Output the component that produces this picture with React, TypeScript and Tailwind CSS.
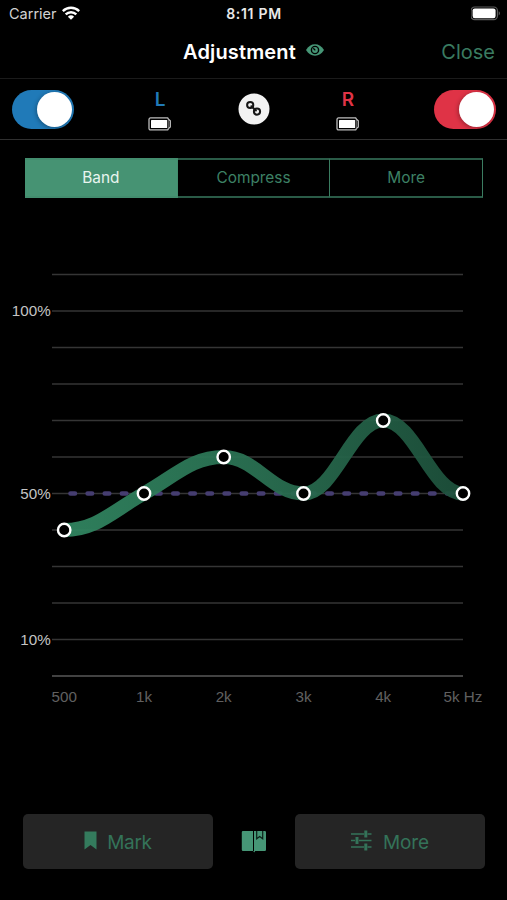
import { useState } from "react";
import clsx from "clsx";

const TABS = ["Band", "Compress", "More"];

// gain in percent at each frequency
const BANDS = [
  { label: "500", x: 64.2, value: 40 },
  { label: "1k", x: 144, value: 50 },
  { label: "2k", x: 223.7, value: 60 },
  { label: "3k", x: 303.5, value: 50 },
  { label: "4k", x: 383.2, value: 70 },
  { label: "5k Hz", x: 463, value: 50 },
];

const GRID = [0, 10, 20, 30, 40, 50, 60, 70, 80, 90, 100, 110];

const CHART_TOP = 260;

const toY = (value: number) => 676 - value * 3.65 - CHART_TOP;

function curvePath() {
  return BANDS.map((band, i) => {
    const y = toY(band.value);
    if (i === 0) return `M${band.x} ${y}`;
    const prev = BANDS[i - 1];
    const dx = (band.x - prev.x) / 2.5;
    // the curve keeps rising through 1k, every other point is an extreme
    const slopeIn = i === 1 ? 18 : 0;
    const slopeOut = i === 2 ? 18 : 0;
    return `C${prev.x + dx} ${toY(prev.value) - slopeOut} ${band.x - dx} ${y + slopeIn} ${band.x} ${y}`;
  }).join(" ");
}

function WifiIcon() {
  return (
    <svg className="-mt-[2px] ml-[5px]" width="18" height="14" viewBox="0 0 18 14" fill="none" stroke="#fff" strokeWidth="2.4">
      <path d="M.8 5.1a11.7 11.7 0 0 1 16.4 0" />
      <path d="M3.7 8.4a7.5 7.5 0 0 1 10.6 0" />
      <path d="M9 13.8 5.9 10.8a4.5 4.5 0 0 1 6.2 0z" fill="#fff" stroke="none" />
    </svg>
  );
}

function StatusBattery() {
  return (
    <svg className="-mt-[2px]" width="31" height="15" viewBox="0 0 31 15">
      <rect x="0" y="1" width="26.400" height="12.600" rx="3.600" fill="none" stroke="#5c5c5c" strokeWidth="1.200" />
      <rect x="1.600" y="2.400" width="23" height="9.800" rx="2.200" fill="#fff" />
      <path d="M27.700 5.200c1.700.6 1.700 3.600 0 4.200z" fill="#5c5c5c" />
    </svg>
  );
}

function DeviceBattery() {
  return (
    <svg width="24" height="14" viewBox="0 0 24 14">
      <path
        d="M2.500.900h17.200l1 1.600 1.600 1.300v6.200l-1.600 1.300-1 1.600H2.500a1.500 1.500 0 0 1-1.500-1.500V2.400A1.500 1.500 0 0 1 2.500.900z"
        fill="none"
        stroke="#bdbdbd"
        strokeWidth="1.300"
      />
      <rect x="3" y="3" width="16.200" height="8" rx=".5" fill="#fff" />
      <path d="M20.400 2.600v8.800" stroke="#777" strokeWidth=".8" />
    </svg>
  );
}

function EyeIcon() {
  return (
    <svg className="mb-[4px] ml-[10px]" width="18" height="12" viewBox="0 0 18 12">
      <path d="M0 6C2.300 2.200 5.300.300 9 .300S15.700 2.200 18 6c-2.300 3.800-5.300 5.700-9 5.700S2.300 9.800 0 6z" fill="#469676" />
      <circle cx="9" cy="6" r="4.300" fill="#000" />
      <circle cx="9" cy="6" r="2.900" fill="#469676" />
      <path d="M7.300 4.300 9.300 6.400" stroke="#000" strokeWidth="1.300" />
    </svg>
  );
}

function LinkIcon() {
  return (
    <svg width="32" height="32" viewBox="0 0 32 32" fill="none">
      <circle cx="16" cy="16" r="15.500" fill="#f2f2f2" />
      <g stroke="#161616" strokeWidth="2">
        <circle cx="12.200" cy="12" r="3.100" />
        <circle cx="19" cy="18.600" r="3.100" />
        <path d="m13.400 13.200 4.500 4.300" strokeLinecap="round" />
      </g>
    </svg>
  );
}

function BookIcon() {
  return (
    <svg width="26" height="24" viewBox="0 0 26 24">
      <path d="M2 1h10v20H2a1.200 1.200 0 0 1-1.200-1.200V2.200A1.200 1.200 0 0 1 2 1z" fill="#469676" />
      <path d="M13 1h10.800A1.200 1.200 0 0 1 25 2.200v17.600a1.200 1.200 0 0 1-1.200 1.200h-9.600l-1 1.500-1-1.500h.8z" fill="#469676" />
      <path d="M15.700 1v7.700l3-2.300 3 2.300V1" fill="none" stroke="#0c2219" strokeWidth="1.200" />
    </svg>
  );
}

function SlidersIcon() {
  return (
    <svg className="-mt-[2px]" width="21" height="21" viewBox="0 0 21 21" fill="none" stroke="#347359" strokeWidth="1.400">
      <path d="M0 4h13M16.500 4h4M0 10.500h4M8 10.500h12.500M0 17h13M16.500 17h4" />
      <path d="M14.800.500v7M6 7v7M14.800 13.500v7" strokeWidth="3" />
    </svg>
  );
}

function Switch({ color }: { color: string }) {
  const [on, setOn] = useState(true);

  return (
    <button
      onClick={() => setOn(!on)}
      className={clsx("flex h-[39px] w-[62px] items-center rounded-full px-[2px]", on ? `${color} justify-end` : "bg-neutral-700")}
    >
      <span className="size-[35px] rounded-full bg-white shadow-[-1px_1px_4px_rgba(0,0,0,0.3)]" />
    </button>
  );
}

function Side({ name, color }: { name: string; color: string }) {
  return (
    <div className="flex flex-col items-center gap-[8px] pt-[3px]">
      <span className={clsx("text-[19px] leading-[19px] font-semibold", color)}>{name}</span>
      <DeviceBattery />
    </div>
  );
}

function Chart() {
  return (
    <svg className="block" width="507" height="460" viewBox="0 0 507 460" fontFamily="Liberation Sans, sans-serif" fontSize="15.2">
      <defs>
        <linearGradient id="curve" gradientUnits="userSpaceOnUse" x1="64" y1="0" x2="463" y2="0">
          <stop offset="0" stopColor="#318661" />
          <stop offset=".5" stopColor="#2a7052" />
          <stop offset="1" stopColor="#1d503b" />
        </linearGradient>
      </defs>
      {GRID.map((value) => (
        <path key={value} d={`M52 ${toY(value)}H463`} stroke={value === 0 ? "#585858" : "#353535"} strokeWidth="1.6" />
      ))}
      <path d={`M70.5 ${toY(50)}H463`} stroke="#453d70" strokeWidth="4.6" strokeDasharray="4.5 12.62" strokeLinecap="round" />
      <path d={curvePath()} fill="none" stroke="url(#curve)" strokeWidth="14" strokeLinecap="round" opacity=".94" />
      {BANDS.map((band) => (
        <circle key={band.label} cx={band.x} cy={toY(band.value)} r="6.2" fill="#000" stroke="#fff" strokeWidth="2.4" />
      ))}
      {[100, 50, 10].map((value) => (
        <text key={value} x="50.7" y={toY(value) + 5} fill="#c4c4c4" textAnchor="end">
          {value}%
        </text>
      ))}
      {BANDS.map((band) => (
        <text key={band.label} x={band.x} y="442" fill="#606060" textAnchor="middle">
          {band.label}
        </text>
      ))}
    </svg>
  );
}

export default function App() {
  const [tab, setTab] = useState("Band");

  return (
    <div className="flex h-[900px] w-[507px] flex-col overflow-hidden bg-black font-[Inter,sans-serif] text-white">
      <div className="grid h-[28px] grid-cols-3 items-center pr-[5px] pl-[9px] text-[14px]">
        <div className="flex items-center text-[#d2d2d2]">
          <span className="text-[14.5px]">Carrier</span>
          <WifiIcon />
        </div>
        <div className="-ml-[3px] pb-[2px] text-center font-semibold tracking-[0.7px] text-[#e8e8e8]">8:11 PM</div>
        <div className="flex justify-end">
          <StatusBattery />
        </div>
      </div>

      <header className="flex h-[51px] items-center border-b border-[#1b1b1b] pr-[12px] pb-[2px] pl-[183px]">
        <h1 className="text-[20px] leading-none font-semibold tracking-[0.15px]">Adjustment</h1>
        <EyeIcon />
        <button className="ml-auto text-[20px] text-[#3a7b61]">Close</button>
      </header>

      <div className="flex h-[61px] items-center border-b border-[#303030] pr-[11px] pl-[12px]">
        <Switch color="bg-[#207ab8]" />
        <div className="flex flex-1 items-center justify-between pr-[74px] pl-[74px]">
          <Side name="L" color="text-[#207ab8]" />
          <LinkIcon />
          <Side name="R" color="text-[#df3346]" />
        </div>
        <Switch color="bg-[#df3346]" />
      </div>

      <div className="mx-[25px] mt-[18px] flex h-[40px] w-[458px] text-[15.4px]">
        {TABS.map((name) => (
          <button
            key={name}
            onClick={() => setTab(name)}
            className={clsx(
              "flex-1 border-y-2 border-r",
              tab === name
                ? "border-[#438d6e] bg-[#469373] text-[#e9f5ef]"
                : "border-y-[#2a5b47] border-r-[#3b7d61] text-[#3d8165]"
            )}
          >
            {name}
          </button>
        ))}
      </div>

      <div className="mt-[62px]">
        <Chart />
      </div>

      <div className="mt-[94px] flex items-center pl-[23px] text-[19px] text-[#347359]">
        <button className="flex h-[55px] w-[190px] items-center justify-center gap-[10px] rounded-[5px] bg-[#252525]">
          <svg className="-mt-[3px]" width="13" height="19" viewBox="0 0 13 19">
            <path d="M.5.5h12v18L6.5 14l-6 4.5z" fill="#347b5d" />
          </svg>
          <span className="pt-[3px] tracking-[-0.3px]">Mark</span>
        </button>
        <div className="flex w-[82px] justify-center">
          <BookIcon />
        </div>
        <button className="flex h-[55px] w-[190px] items-center justify-center gap-[11px] rounded-[5px] bg-[#252525]">
          <SlidersIcon />
          <span className="pt-[3px] tracking-[-0.1px]">More</span>
        </button>
      </div>
    </div>
  );
}
